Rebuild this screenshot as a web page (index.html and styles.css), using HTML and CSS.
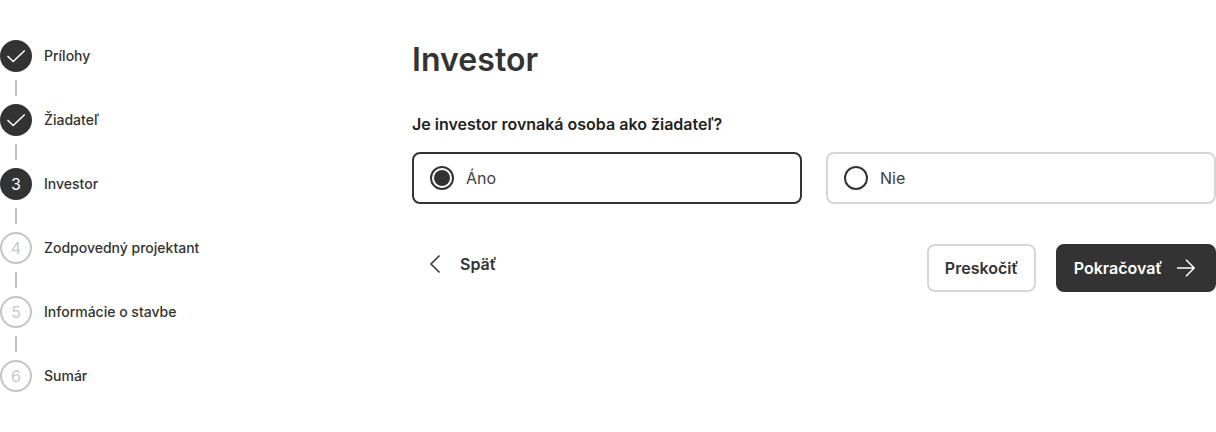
FILE: index.html
```html
<!DOCTYPE html>
<html lang="sk">
<head>
<meta charset="utf-8">
<title>Investor</title>
<link rel="stylesheet" href="styles.css">
</head>
<body>
<div class="layout">
  <ol class="stepper">
    <li class="step"><span class="badge done"><svg width="24" height="24" viewBox="0 0 24 24"><path d="M3.500 12l5.700 5.500L20.700 6.500"/></svg></span><span class="label">Prílohy</span></li>
    <li class="step"><span class="badge done"><svg width="24" height="24" viewBox="0 0 24 24"><path d="M3.500 12l5.700 5.500L20.700 6.500"/></svg></span><span class="label">Žiadateľ</span></li>
    <li class="step"><span class="badge done">3</span><span class="label">Investor</span></li>
    <li class="step"><span class="badge">4</span><span class="label">Zodpovedný projektant</span></li>
    <li class="step"><span class="badge">5</span><span class="label">Informácie o stavbe</span></li>
    <li class="step"><span class="badge">6</span><span class="label">Sumár</span></li>
  </ol>
  <main class="content">
    <h1 class="title">Investor</h1>
    <p class="question">Je investor rovnaká osoba ako žiadateľ?</p>
    <div class="options">
      <div class="option selected"><span class="radio"></span><span>Áno</span></div>
      <div class="option"><span class="radio"></span><span>Nie</span></div>
    </div>
    <div class="actions">
      <button class="back"><svg width="24" height="24" viewBox="0 0 24 24"><path d="M16.500 3.500L8 12l8.500 8.500"/></svg><span>Späť</span></button>
      <div class="forward">
        <button class="button">Preskočiť</button>
        <button class="button primary"><span>Pokračovať</span><svg width="24" height="24" viewBox="0 0 24 24"><path d="M3 12h17M12 3.800l8.200 8.200-8.200 8.200"/></svg></button>
      </div>
    </div>
  </main>
</div>
</body>
</html>
```
FILE: styles.css
```css
* { box-sizing: border-box; }
body { margin: 0; background: #fff; color: #333; font-family: Inter, sans-serif; }
svg { fill: none; stroke: currentColor; stroke-width: 1.5; flex: none; }
.layout { display: grid; grid-template-columns: 412px 1fr; padding-top: 40px; }
.stepper { list-style: none; margin: 0; padding: 0; }
.step { display: grid; grid-template-columns: 32px 1fr; column-gap: 12px; align-items: center; font-size: 14px; font-weight: 500; line-height: 20px; }
.step:not(:last-child)::after { content: ""; width: 2px; height: 16px; margin: 8px auto; background: #bfbfbf; }
.badge { display: flex; align-items: center; justify-content: center; width: 32px; height: 32px; border: 2px solid #c4c4c4; border-radius: 50%; color: #c8c8c8; font-size: 16px; font-weight: 400; }
.badge.done { border-color: #333; background: #333; color: #fff; }
.title { margin: 0; font-size: 32px; line-height: 40px; font-weight: 600; letter-spacing: 0.07px; }
.question { margin: 32px 0 16px; color: #222; font-size: 16px; line-height: 24px; font-weight: 600; }
.options { display: grid; grid-template-columns: 1fr 1fr; gap: 24px; }
.option { display: flex; align-items: center; gap: 12px; height: 52px; padding: 0 16px; border: 2px solid #d6d6d6; border-radius: 8px; color: #3d3d3d; font-size: 16px; line-height: 24px; }
.option.selected { border-color: #333; }
.radio { width: 24px; height: 24px; border: 2px solid #333; border-radius: 50%; }
.selected .radio { background: #333; background-clip: content-box; padding: 2px; }
.actions { display: flex; align-items: flex-start; justify-content: space-between; margin-top: 40px; }
.forward { display: flex; gap: 20px; }
.back, .button { display: flex; align-items: center; font: 600 16px/24px Inter, sans-serif; color: #333; background: none; border: 0; }
.back { gap: 13px; height: 40px; padding: 0 11px; }
.button { justify-content: center; width: 109px; height: 48px; padding: 0; border: 2px solid #d6d6d6; border-radius: 8px; }
.button.primary { gap: 12px; width: 160px; border-color: #333; background: #333; color: #fff; }
```
